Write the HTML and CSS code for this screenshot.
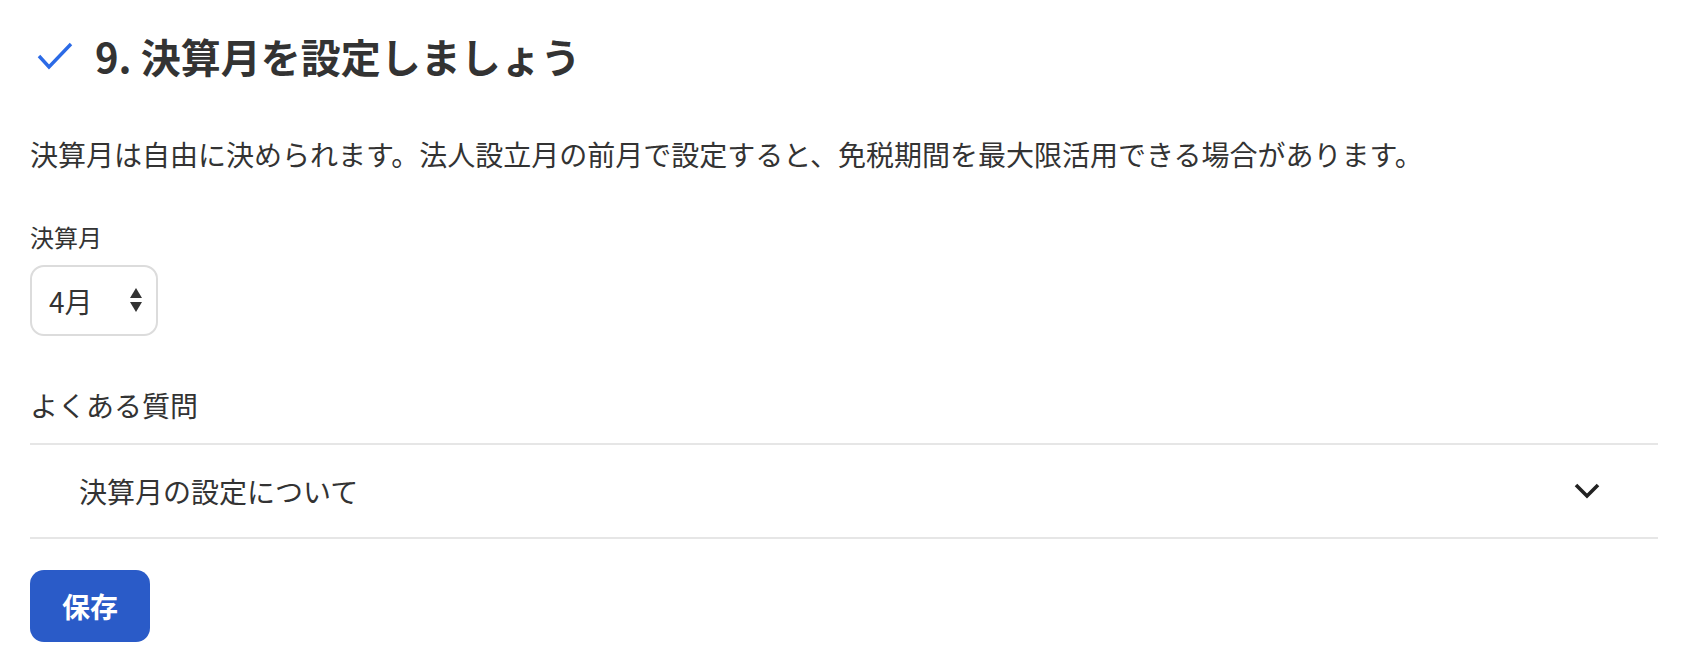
FILE: index.html
```html
<!DOCTYPE html>
<html lang="ja">

<head>
  <meta charset="UTF-8">
  <title>決算月の設定</title>
  <link rel="stylesheet" href="styles.css">
</head>

<body>
  <div class="step">
    <!-- 見出し -->
    <div class="step-title">
      <svg class="check" width="36" height="28" viewBox="0 0 36 28">
        <polyline points="2,14 12,25 34,2" fill="none" stroke="#2b6ae6" stroke-width="3.4" />
      </svg>
      <h2>9. 決算月を設定しましょう</h2>
    </div>

    <p class="desc">決算月は自由に決められます。法人設立月の前月で設定すると、免税期間を最大限活用できる場合があります。</p>

    <label class="field-label" for="month">決算月</label>
    <div class="select-wrap">
      <select id="month" class="select">
        <option>1月</option>
        <option>2月</option>
        <option>3月</option>
        <option selected>4月</option>
        <option>5月</option>
        <option>6月</option>
        <option>7月</option>
        <option>8月</option>
        <option>9月</option>
        <option>10月</option>
        <option>11月</option>
        <option>12月</option>
      </select>
      <svg class="select-arrows" width="12" height="25" viewBox="0 0 12 25">
        <polygon points="6,0 12,10 0,10" fill="#333" />
        <polygon points="0,14 12,14 6,24" fill="#333" />
      </svg>
    </div>

    <h3 class="faq-title">よくある質問</h3>
    <div class="faq">
      <div class="faq-item">
        <span>決算月の設定について</span>
        <svg class="chevron" width="26" height="16" viewBox="0 0 26 16">
          <polyline points="2,2 13,13 24,2" fill="none" stroke="#222" stroke-width="3.6" />
        </svg>
      </div>
    </div>

    <button class="btn-save">保存</button>
  </div>
</body>

</html>
```

FILE: styles.css
```css
body {
  margin: 0;
  font-family: "Noto Sans CJK JP", "Noto Sans", sans-serif;
  color: #333;
  background: #fff;
}

.step {
  padding: 28px 36px 0 30px;
}

.step-title {
  display: flex;
  align-items: center;
  gap: 22px;
  padding-left: 7px;
}

.check {
  display: block;
}

.step-title h2 {
  margin: 0;
  font-size: 40px;
  line-height: 56px;
  font-weight: 700;
  color: #333;
}

.desc {
  margin: 49px 0 0;
  font-size: 28px;
  line-height: 42px;
}

.field-label {
  display: block;
  margin-top: 44px;
  font-size: 24px;
  line-height: 36px;
}

.select-wrap {
  position: relative;
  width: 128px;
  margin-top: 10px;
}

.select {
  appearance: none;
  -webkit-appearance: none;
  box-sizing: border-box;
  width: 128px;
  height: 71px;
  padding: 0 0 0 17px;
  border: 2px solid #dcdcdc;
  border-radius: 14px;
  background: #fff;
  font-family: inherit;
  font-size: 28px;
  color: #333;
}

.select-arrows {
  position: absolute;
  right: 16px;
  top: 23px;
  pointer-events: none;
}

.faq-title {
  margin: 48px 0 0;
  font-size: 28px;
  line-height: 42px;
  font-weight: 400;
}

.faq {
  margin-top: 17px;
  border-top: 2px solid #e6e6e6;
  border-bottom: 2px solid #e6e6e6;
}

.faq-item {
  display: flex;
  align-items: center;
  justify-content: space-between;
  height: 92px;
  padding: 0 58px 0 49px;
  font-size: 28px;
}

.chevron {
  display: block;
}

.btn-save {
  display: block;
  margin-top: 31px;
  width: 120px;
  height: 72px;
  border: 0;
  border-radius: 14px;
  background: #2a5bc8;
  color: #fff;
  font-family: inherit;
  font-size: 28px;
  font-weight: 700;
}
```
